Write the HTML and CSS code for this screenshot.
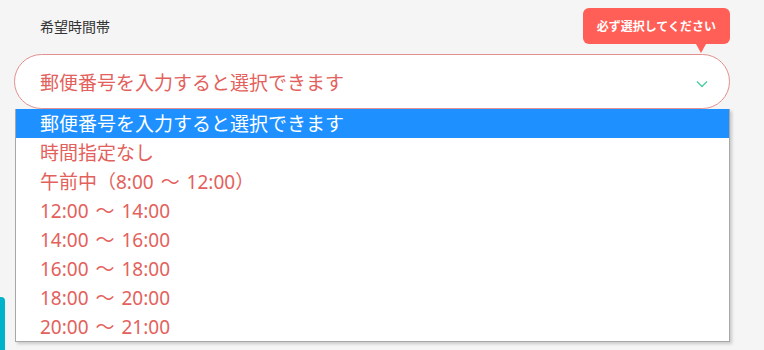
FILE: index.html
```html
<!DOCTYPE html>
<html lang="ja">
<head>
<meta charset="utf-8">
<link rel="stylesheet" href="styles.css">
</head>
<body>
<div class="page">
  <div class="label">希望時間帯</div>
  <div class="select">
    <span class="select-text">郵便番号を入力すると選択できます</span>
    <svg class="chevron" width="12" height="8" viewBox="0 0 12 8"><polyline points="1,1.5 6,6.5 11,1.5" fill="none" stroke="#4fcca3" stroke-width="1.4"/></svg>
    <div class="tooltip">必ず選択してください</div>
  </div>
  <ul class="options">
    <li class="opt active">郵便番号を入力すると選択できます</li>
    <li class="opt">時間指定なし</li>
    <li class="opt">午前中（8:00 〜 12:00）</li>
    <li class="opt">12:00 〜 14:00</li>
    <li class="opt">14:00 〜 16:00</li>
    <li class="opt">16:00 〜 18:00</li>
    <li class="opt">18:00 〜 20:00</li>
    <li class="opt">20:00 〜 21:00</li>
  </ul>
</div>
<div class="side-tab"></div>
</body>
</html>
```
FILE: styles.css
```css
html, body {
  margin: 0;
  padding: 0;
  height: 100%;
  background: #f5f5f5;
  font-family: "Noto Sans CJK JP", "Noto Sans", sans-serif;
  overflow: hidden;
}
.page {
  padding: 16px 34px 0 14px;
}
.label {
  font-size: 14px;
  line-height: 20px;
  color: #333;
  padding-left: 26px;
  margin-bottom: 18px;
}
.select {
  position: relative;
  height: 53px;
  border: 1px solid #e39090;
  border-radius: 28px;
  background: #fff;
  display: flex;
  align-items: center;
  padding: 0 20px 0 25px;
}
.select-text {
  flex: 1;
  font-size: 19px;
  color: #e3615c;
  line-height: 1;
}
.chevron {
  margin-right: 1px;
  margin-top: 4px;
}
.tooltip {
  position: absolute;
  right: -1px;
  top: -47px;
  height: 36px;
  line-height: 36px;
  padding: 0 14px;
  background: #ff5f57;
  color: #fff;
  font-size: 12px;
  font-weight: 700;
  border-radius: 6px;
}
.tooltip::after {
  content: "";
  position: absolute;
  right: 24px;
  bottom: -9px;
  border-left: 5px solid transparent;
  border-right: 5px solid transparent;
  border-top: 9px solid #ff5f57;
}
.options {
  list-style: none;
  margin: 0 0 0 1px;
  padding: 0;
  background: #fff;
  border: 1px solid #a8a8a8;
  border-top: 0;
  box-shadow: 2px 2px 3px rgba(0,0,0,0.18);
}
.opt {
  height: 29px;
  box-sizing: border-box;
  padding-top: 2px;
  line-height: 27px;
  font-size: 19px;
  font-family: "Noto Sans", "Noto Sans CJK JP", sans-serif;
  word-spacing: 2px;
  padding-left: 24px;
  color: #e3615c;
  white-space: nowrap;
}
.opt.active {
  background: #1e90ff;
  color: #fff;
}
.side-tab {
  position: absolute;
  left: 0;
  top: 297px;
  width: 5px;
  height: 60px;
  background: #00b2ca;
  border-top-right-radius: 4px;
}
```
